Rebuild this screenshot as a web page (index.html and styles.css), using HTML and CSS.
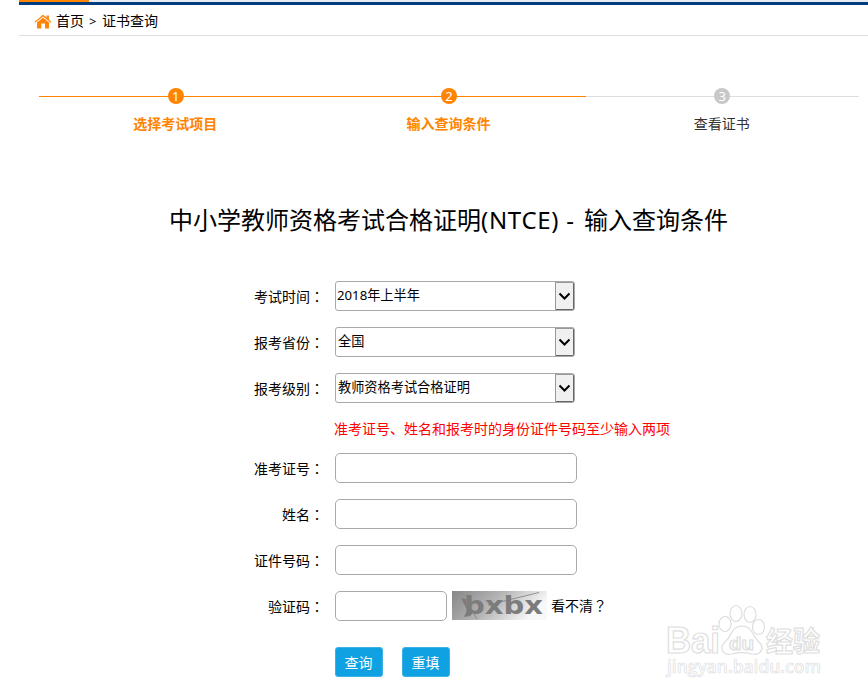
FILE: index.html
```html
<!DOCTYPE html>
<html lang="zh-CN">
<head>
    <meta charset="UTF-8">
    <title>证书查询</title>
    <link rel="stylesheet" href="styles.css">
</head>
<body>
    <div class="page">
        <div class="nav-line"><div class="nav-active"></div></div>
        <div class="crumb">
            <svg class="home" width="18" height="15" viewBox="0 0 18 15">
                <path d="M0.5 8 L9 0.5 L12.5 3.4 V1.4 H15 V5.6 L17.5 8 L16.6 8.8 L9 2.6 L1.4 8.8 Z" fill="#ff8a14"/>
                <path d="M3 8.6 L9 3.7 L15 8.6 V14.5 H11 V9.5 H7.3 V14.5 H3 Z" fill="#ff8400"/>
            </svg>
            <span>首页</span><span class="sep">&gt;</span><span>证书查询</span>
        </div>

        <div class="steps">
            <div class="step done"><div class="bar"><span class="num">1</span></div><p>选择考试项目</p></div>
            <div class="step done"><div class="bar"><span class="num">2</span></div><p>输入查询条件</p></div>
            <div class="step"><div class="bar"><span class="num">3</span></div><p>查看证书</p></div>
        </div>

        <h1>中小学教师资格考试合格证明<span class="latin">(NTCE) - </span>输入查询条件</h1>

        <form class="query">
            <div class="row">
                <label>考试时间<span class="full" lang="zh-TW">：</span></label>
                <div class="select"><span class="value year">2018年上半年</span><span class="arrow"><svg width="13" height="9" viewBox="0 0 13 9"><path d="M1.5 1.5 L6.5 6.5 L11.5 1.5"/></svg></span></div>
            </div>
            <div class="row">
                <label>报考省份<span class="full" lang="zh-TW">：</span></label>
                <div class="select"><span class="value">全国</span><span class="arrow"><svg width="13" height="9" viewBox="0 0 13 9"><path d="M1.5 1.5 L6.5 6.5 L11.5 1.5"/></svg></span></div>
            </div>
            <div class="row">
                <label>报考级别<span class="full" lang="zh-TW">：</span></label>
                <div class="select"><span class="value">教师资格考试合格证明</span><span class="arrow"><svg width="13" height="9" viewBox="0 0 13 9"><path d="M1.5 1.5 L6.5 6.5 L11.5 1.5"/></svg></span></div>
            </div>
            <p class="hint">准考证号、姓名和报考时的身份证件号码至少输入两项</p>
            <div class="row">
                <label>准考证号<span class="full" lang="zh-TW">：</span></label>
                <input type="text">
            </div>
            <div class="row">
                <label>姓名<span class="full" lang="zh-TW">：</span></label>
                <input type="text">
            </div>
            <div class="row">
                <label>证件号码<span class="full" lang="zh-TW">：</span></label>
                <input type="text">
            </div>
            <div class="row">
                <label>验证码<span class="full" lang="zh-TW">：</span></label>
                <input class="short" type="text">
                <svg class="captcha" width="95" height="29" viewBox="0 0 95 29">
                    <defs>
                        <linearGradient id="shade" x1="0" y1="0" x2="1" y2="0.3">
                            <stop offset="0" stop-color="#868686"/>
                            <stop offset="0.5" stop-color="#b4b4b4"/>
                            <stop offset="1" stop-color="#f8f8f8"/>
                        </linearGradient>
                    </defs>
                    <rect width="95" height="29" fill="url(#shade)"/>
                    <text class="code" x="12" y="23" textLength="79" lengthAdjust="spacingAndGlyphs">bxbx</text>
                    <path d="M9 7 L14 8 L15 17 L22 21 L18 25 L12 26 L15 19 Z" fill="#7c7c7c"/>
                    <path d="M36 14 L87 1.5 M18 16 L25 28" stroke="#7c7c7c" stroke-width="0.8" fill="none"/>
                </svg>
                <span class="refresh">看不清<span class="full" lang="zh-TW">？</span></span>
            </div>
            <div class="buttons">
                <button type="button">查询</button>
                <button type="button">重填</button>
            </div>
        </form>
    </div>

    <svg class="watermark" width="168" height="92" viewBox="0 0 168 92">
        <g class="outline">
            <text class="brand" x="4" y="53" textLength="54" lengthAdjust="spacingAndGlyphs">Bai</text>
            <path d="M64 41 C69 37 70 26 80 26 C90 26 91 37 96 41 C104 48 98 56 90 54 C83 52 77 52 70 54 C61 56 56 48 64 41 Z"/>
            <ellipse cx="63" cy="24" rx="6" ry="7.5"/>
            <ellipse cx="74" cy="13.5" rx="6" ry="8"/>
            <ellipse cx="88" cy="14.5" rx="6" ry="8"/>
            <ellipse cx="96.5" cy="27" rx="6" ry="7.5"/>
            <text class="du" x="67" y="50" textLength="25" lengthAdjust="spacingAndGlyphs">du</text>
            <text class="exp" x="104" y="52" textLength="54" lengthAdjust="spacingAndGlyphs">经验</text>
            <text class="site" x="5" y="73" textLength="154" lengthAdjust="spacingAndGlyphs">jingyan.baidu.com</text>
        </g>
    </svg>
</body>
</html>
```
FILE: styles.css
```css
* {
    box-sizing: border-box;
}
body {
    margin: 0;
    height: 699px;
    overflow: hidden;
    background: #fff;
    color: #000;
    font-family: "Noto Sans", "Noto Sans CJK SC", sans-serif;
    font-size: 14px;
    line-height: 20px;
}
p, h1 {
    margin: 0;
}
.page {
    margin-left: 19px;
}
.nav-line {
    height: 5px;
    background: #e9ecf1;
    border-bottom: 3px solid #003d7e;
}
.nav-active {
    width: 70px;
    height: 2px;
    background: #ff8400;
}
.crumb {
    display: flex;
    align-items: center;
    height: 31px;
    padding: 1px 0 0 15px;
    border-bottom: 1px solid #ddd;
}
.home {
    margin: 2px 4px 0 0;
}
.sep {
    width: 18px;
    padding-left: 5px;
    font-size: 13px;
}
.steps {
    display: flex;
    width: 820px;
    margin: 52px 0 0 20px;
}
.step {
    flex: 1;
    text-align: center;
    color: #333;
}
.bar {
    display: flex;
    justify-content: center;
    height: 16px;
    background: linear-gradient(#ddd, #ddd) 0 8px / 100% 1px no-repeat;
}
.num {
    width: 16px;
    height: 16px;
    border-radius: 50%;
    background: #c8c8c8;
    color: #fff;
    font-size: 13px;
    line-height: 16px;
}
.step p {
    margin: 10px 1px 0 0;
}
.done {
    color: #ff8400;
    font-weight: bold;
}
.done .bar {
    background-image: linear-gradient(#ff8400, #ff8400);
}
.done .num {
    background: #ff8400;
    font-weight: normal;
}
h1 {
    display: flex;
    justify-content: center;
    margin: 66px 0 0 10px;
    font-size: 24px;
    font-weight: normal;
    line-height: 40px;
    white-space: pre;
}
.latin {
    width: 103px;
    letter-spacing: 0.7px;
}
.query {
    margin: 41px 0 0 216px;
}
.row {
    display: flex;
    height: 30px;
    margin-bottom: 16px;
}
label {
    width: 89px;
    margin-right: 11px;
    text-align: right;
    line-height: 30px;
}
.full {
    font-family: "Noto Sans CJK TC", sans-serif;
}
.select, input {
    height: 30px;
    border: 1px solid #a9a9a9;
    border-radius: 5px;
    background: #fff;
}
.select {
    display: flex;
    justify-content: space-between;
    width: 240px;
    border-radius: 3px;
}
.value {
    padding-left: 2px;
    font-size: 13.2px;
    line-height: 26px;
}
.year {
    padding-left: 1px;
}
.arrow {
    display: flex;
    align-items: center;
    justify-content: center;
    width: 19px;
    border: 1px solid #999;
    border-right-color: #666;
    border-bottom-color: #666;
    border-radius: 0 2px 2px 0;
    background: #f0f0f0;
}
.arrow path {
    fill: none;
    stroke: #000;
    stroke-width: 2;
}
input {
    width: 242px;
    padding: 0 4px;
}
.short {
    width: 112px;
}
.hint {
    height: 34px;
    margin: 0 0 0 99px;
    color: #f00;
}
.captcha {
    margin: 0 4px 0 5px;
}
.code {
    font: bold 24px "DejaVu Sans", sans-serif;
    fill: #7c7c7c;
}
.refresh {
    line-height: 28px;
}
.buttons {
    display: flex;
    gap: 19px;
    margin: 26px 0 0 100px;
}
button {
    width: 48px;
    height: 30px;
    padding: 2px 1px 0 0;
    border: 1px solid #3cb1e6;
    border-radius: 3px;
    background: #0fa1e2;
    color: #fff;
    font: inherit;
}
.watermark {
    position: absolute;
    left: 662px;
    top: 600px;
}
.outline {
    fill: #fff;
    stroke: #dedede;
    stroke-width: 1.2;
}
.brand {
    font: bold 36px "Liberation Sans", sans-serif;
}
.du {
    font: bold 19px "Liberation Sans", sans-serif;
}
.exp {
    font: bold 28px "Noto Sans CJK SC", sans-serif;
}
.site {
    font: 600 18px "Open Sans", sans-serif;
    stroke-width: 0.7;
}
```
